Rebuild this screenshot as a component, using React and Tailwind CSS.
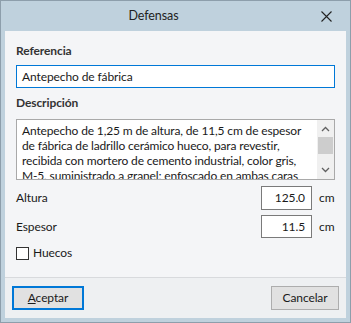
export default function App() {
  const lines = [
    "Antepecho de 1,25 m de altura, de 11,5 cm de espesor",
    "de fábrica de ladrillo cerámico hueco, para revestir,",
    "recibida con mortero de cemento industrial, color gris,",
    "M-5, suministrado a granel; enfoscado en ambas caras",
  ];

  return (
    <div
      className="w-[351px] h-[323px] bg-[#bfd1dd] border border-[#8d9eab] flex flex-col text-[12px] tracking-[-0.1px] text-[#1a1a1a]"
      style={{ fontFamily: 'Lato, "Noto Sans", sans-serif' }}
    >
      <div className="h-[30px] flex items-center relative shrink-0 pr-[44px]">
        <div className="flex-1 text-center text-[12.5px] text-[#222]">Defensas</div>
        <svg className="absolute right-[18px] top-[10px]" width="11" height="11" viewBox="0 0 11 11">
          <path d="M0.5 0.5 L10.5 10.5 M10.5 0.5 L0.5 10.5" stroke="#222" strokeWidth="1.1" />
        </svg>
      </div>

      <div className="flex-1 mx-[4px] mb-[4px] bg-[#f4f5f7] flex flex-col">
        <div className="px-[11px] pt-[12px] flex flex-col">
          <div className="font-bold leading-[16px] text-[#333]">Referencia</div>
          <div className="mt-[6px] h-[23px] border border-[#0078d7] bg-white flex items-center px-[5px] leading-none">
            Antepecho de fábrica
          </div>

          <div className="mt-[7px] font-bold leading-[16px] text-[#333]">Descripción</div>
          <div className="mt-[8px] h-[61px] border border-[#a9a9a9] bg-white flex overflow-hidden">
            <div className="flex-1 pl-[5px] pt-[3px] overflow-hidden tracking-[-0.15px]">
              {lines.map((l) => (
                <div key={l} className="whitespace-nowrap leading-[15px]">
                  {l}
                </div>
              ))}
            </div>
            <div className="w-[17px] bg-[#f0f0f0] flex flex-col items-center">
              <svg className="mt-[6px]" width="9" height="6" viewBox="0 0 9 6">
                <path d="M1 5 L4.5 1.5 L8 5" stroke="#606060" strokeWidth="1.3" fill="none" />
              </svg>
              <div className="mt-[5px] w-[15px] h-[17px] bg-[#cdcdcd]" />
              <div className="flex-1" />
              <svg className="mb-[6px]" width="9" height="6" viewBox="0 0 9 6">
                <path d="M1 1 L4.5 4.5 L8 1" stroke="#606060" strokeWidth="1.3" fill="none" />
              </svg>
            </div>
          </div>

          <div className="mt-[6px] flex items-center">
            <div className="flex-1">Altura</div>
            <div className="w-[51px] h-[24px] border border-[#7a7a7a] bg-white flex items-center justify-end pr-[6px] leading-none">
              125.0
            </div>
            <div className="w-[23px] pl-[7px]">cm</div>
          </div>
          <div className="mt-[5px] flex items-center">
            <div className="flex-1">Espesor</div>
            <div className="w-[51px] h-[23px] border border-[#7a7a7a] bg-white flex items-center justify-end pr-[6px] leading-none">
              11.5
            </div>
            <div className="w-[23px] pl-[7px]">cm</div>
          </div>

          <div className="mt-[7px] flex items-center">
            <div className="w-[13px] h-[13px] border border-[#333] bg-white" />
            <div className="ml-[4px] leading-[16px]">Huecos</div>
          </div>
        </div>

        <div className="mt-auto border-t border-[#d8dadd] bg-[#eef0f2] h-[41px] px-[7px] flex items-center justify-between">
          <button className="w-[72px] h-[24px] border-2 border-[#0078d7] bg-[#e1e1e1] leading-none">
            <span className="underline">A</span>ceptar
          </button>
          <button className="w-[68px] h-[24px] border border-[#adadad] bg-[#e1e1e1] leading-none">
            Cancelar
          </button>
        </div>
      </div>
    </div>
  );
}
